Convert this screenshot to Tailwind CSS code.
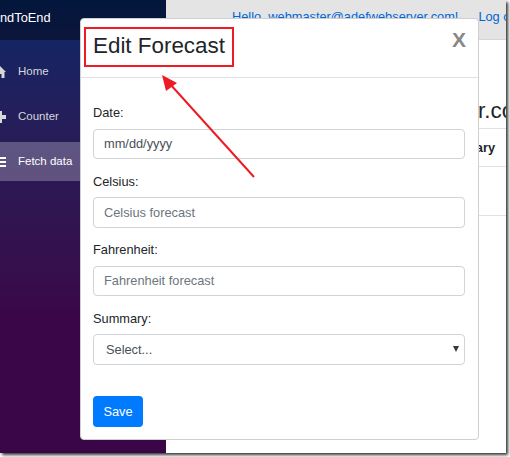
<!DOCTYPE html>
<html>
<head>
    <title>Edit Forecast</title>
    <script src="https://cdn.jsdelivr.net/npm/@tailwindcss/browser@4"></script>
</head>
<body class="bg-white overflow-hidden font-['Liberation_Sans',Arial,sans-serif]">
    <div class="relative w-[510px] h-[457px] overflow-hidden">
        <!-- page behind the modal -->
        <div class="flex w-[506px] h-[453px] bg-white shadow-[2px_2px_3px_#333]">
            <div class="w-[166px] shrink-0 flex flex-col bg-linear-to-b from-[#052767] to-[#3a0647] to-70%">
                <div class="h-10 shrink-0 bg-black/40 text-white text-[12.8px] leading-[36px] whitespace-nowrap">ndToEnd</div>
                <div class="flex flex-col gap-[6px] pt-[12px] text-[11.5px] text-[#d7d7d7]">
                    <div class="h-[39px] flex items-center gap-[12px] -ml-[6px]">
                        <svg class="w-3 h-3" viewBox="0 0 12 12" fill="#d7d7d7"><path d="M6 0 0 6h1.500V12h3V8h3v4h3V6H12z"/></svg>
                        <span>Home</span>
                    </div>
                    <div class="h-[39px] flex items-center gap-[12px] -ml-[6px]">
                        <svg class="w-3 h-3" viewBox="0 0 12 12" fill="#d7d7d7"><path d="M4 0h4v4h4v4H8v4H4V8H0V4h4z"/></svg>
                        <span>Counter</span>
                    </div>
                    <div class="h-[39px] flex items-center gap-[12px] -ml-[6px] bg-white/25 text-white">
                        <svg class="w-3 h-3" viewBox="0 0 12 12" fill="#fff"><path d="M0 1h12v2H0zM2 5h10v2H2zM0 9h12v2H0z"/></svg>
                        <span>Fetch data</span>
                    </div>
                </div>
            </div>
            <div class="flex-1 flex flex-col min-w-0 overflow-hidden">
                <div class="h-10 shrink-0 bg-[#e4e4e4] border-b border-[#d6d5d5] flex gap-[20px] pl-[66px] pt-[7px] text-[12.8px] leading-5 text-[#0366d6] whitespace-nowrap">
                    <span>Hello, webmaster@adefwebserver.com!</span>
                    <span>Log out</span>
                </div>
                <div class="h-[88px] shrink-0 pl-[312px] pt-[57px] text-[22.4px] leading-7 text-[#212529] whitespace-nowrap">r.co</div>
                <div class="h-[39px] shrink-0 border-y border-[#dee2e6] flex items-center justify-end pr-[11px] text-[12.8px] font-bold text-[#212529]">ary</div>
                <div class="h-[49px] shrink-0 border-b border-[#dee2e6]"></div>
            </div>
        </div>
        <!-- modal -->
        <div class="absolute left-[80px] top-[18px] w-[399px] h-[422px] bg-white border border-[#cfcfcf] rounded-[4px]">
            <div class="h-[59px] border-b border-[#dee2e6] relative">
                <h2 class="absolute left-[12px] top-[13px] text-[22.4px] leading-7 text-[#212529]">Edit Forecast</h2>
                <span class="absolute right-[12px] top-[9px] text-[21px] leading-6 font-bold text-[#888]">X</span>
            </div>
            <form class="px-[12px] pt-[25px] text-[12.8px] text-[#212529]">
                <label class="block leading-[20px]">Date:</label>
                <input type="text" placeholder="mm/dd/yyyy" class="block mt-[6px] w-[372px] h-[30px] px-[10px] pb-[1px] border border-[#ced4da] rounded-[4px] text-[12.8px] placeholder:text-[#495057]">
                <label class="block mt-[13px] leading-[20px]">Celsius:</label>
                <input type="text" placeholder="Celsius forecast" class="block mt-[5px] w-[372px] h-[31px] px-[10px] border border-[#ced4da] rounded-[4px] text-[12.8px] placeholder:text-[#6c757d]">
                <label class="block mt-[12px] leading-[20px]">Fahrenheit:</label>
                <input type="text" placeholder="Fahrenheit forecast" class="block mt-[6px] w-[372px] h-[30px] px-[10px] pb-[1px] border border-[#ced4da] rounded-[4px] text-[12.8px] placeholder:text-[#6c757d]">
                <label class="block mt-[13px] leading-[20px]">Summary:</label>
                <div class="relative mt-[5px] w-[372px] h-[31px] border border-[#ced4da] rounded-[4px] pl-[12px] leading-[29px] text-[#495057]">Select...
                    <span class="absolute right-[5px] top-[11px] w-0 h-0 border-x-[3px] border-x-transparent border-t-[6px] border-t-[#343a40]"></span>
                </div>
                <button type="button" class="block mt-[31px] w-[50px] h-[31px] bg-[#007bff] rounded-[4px] text-white text-[12.8px]">Save</button>
            </form>
        </div>
        <!-- annotation -->
        <div class="absolute left-[84px] top-[27px] w-[150px] h-[40px] border-[2px] border-[#ed1c24]"></div>
        <svg class="absolute left-0 top-0 w-[510px] h-[457px] pointer-events-none" viewBox="0 0 510 457">
            <line x1="254" y1="177" x2="170" y2="84" stroke="#ed1c24" stroke-width="2"/>
            <polygon points="162,75 177,83 166,91" fill="#ed1c24"/>
        </svg>
    </div>
</body>
</html>
